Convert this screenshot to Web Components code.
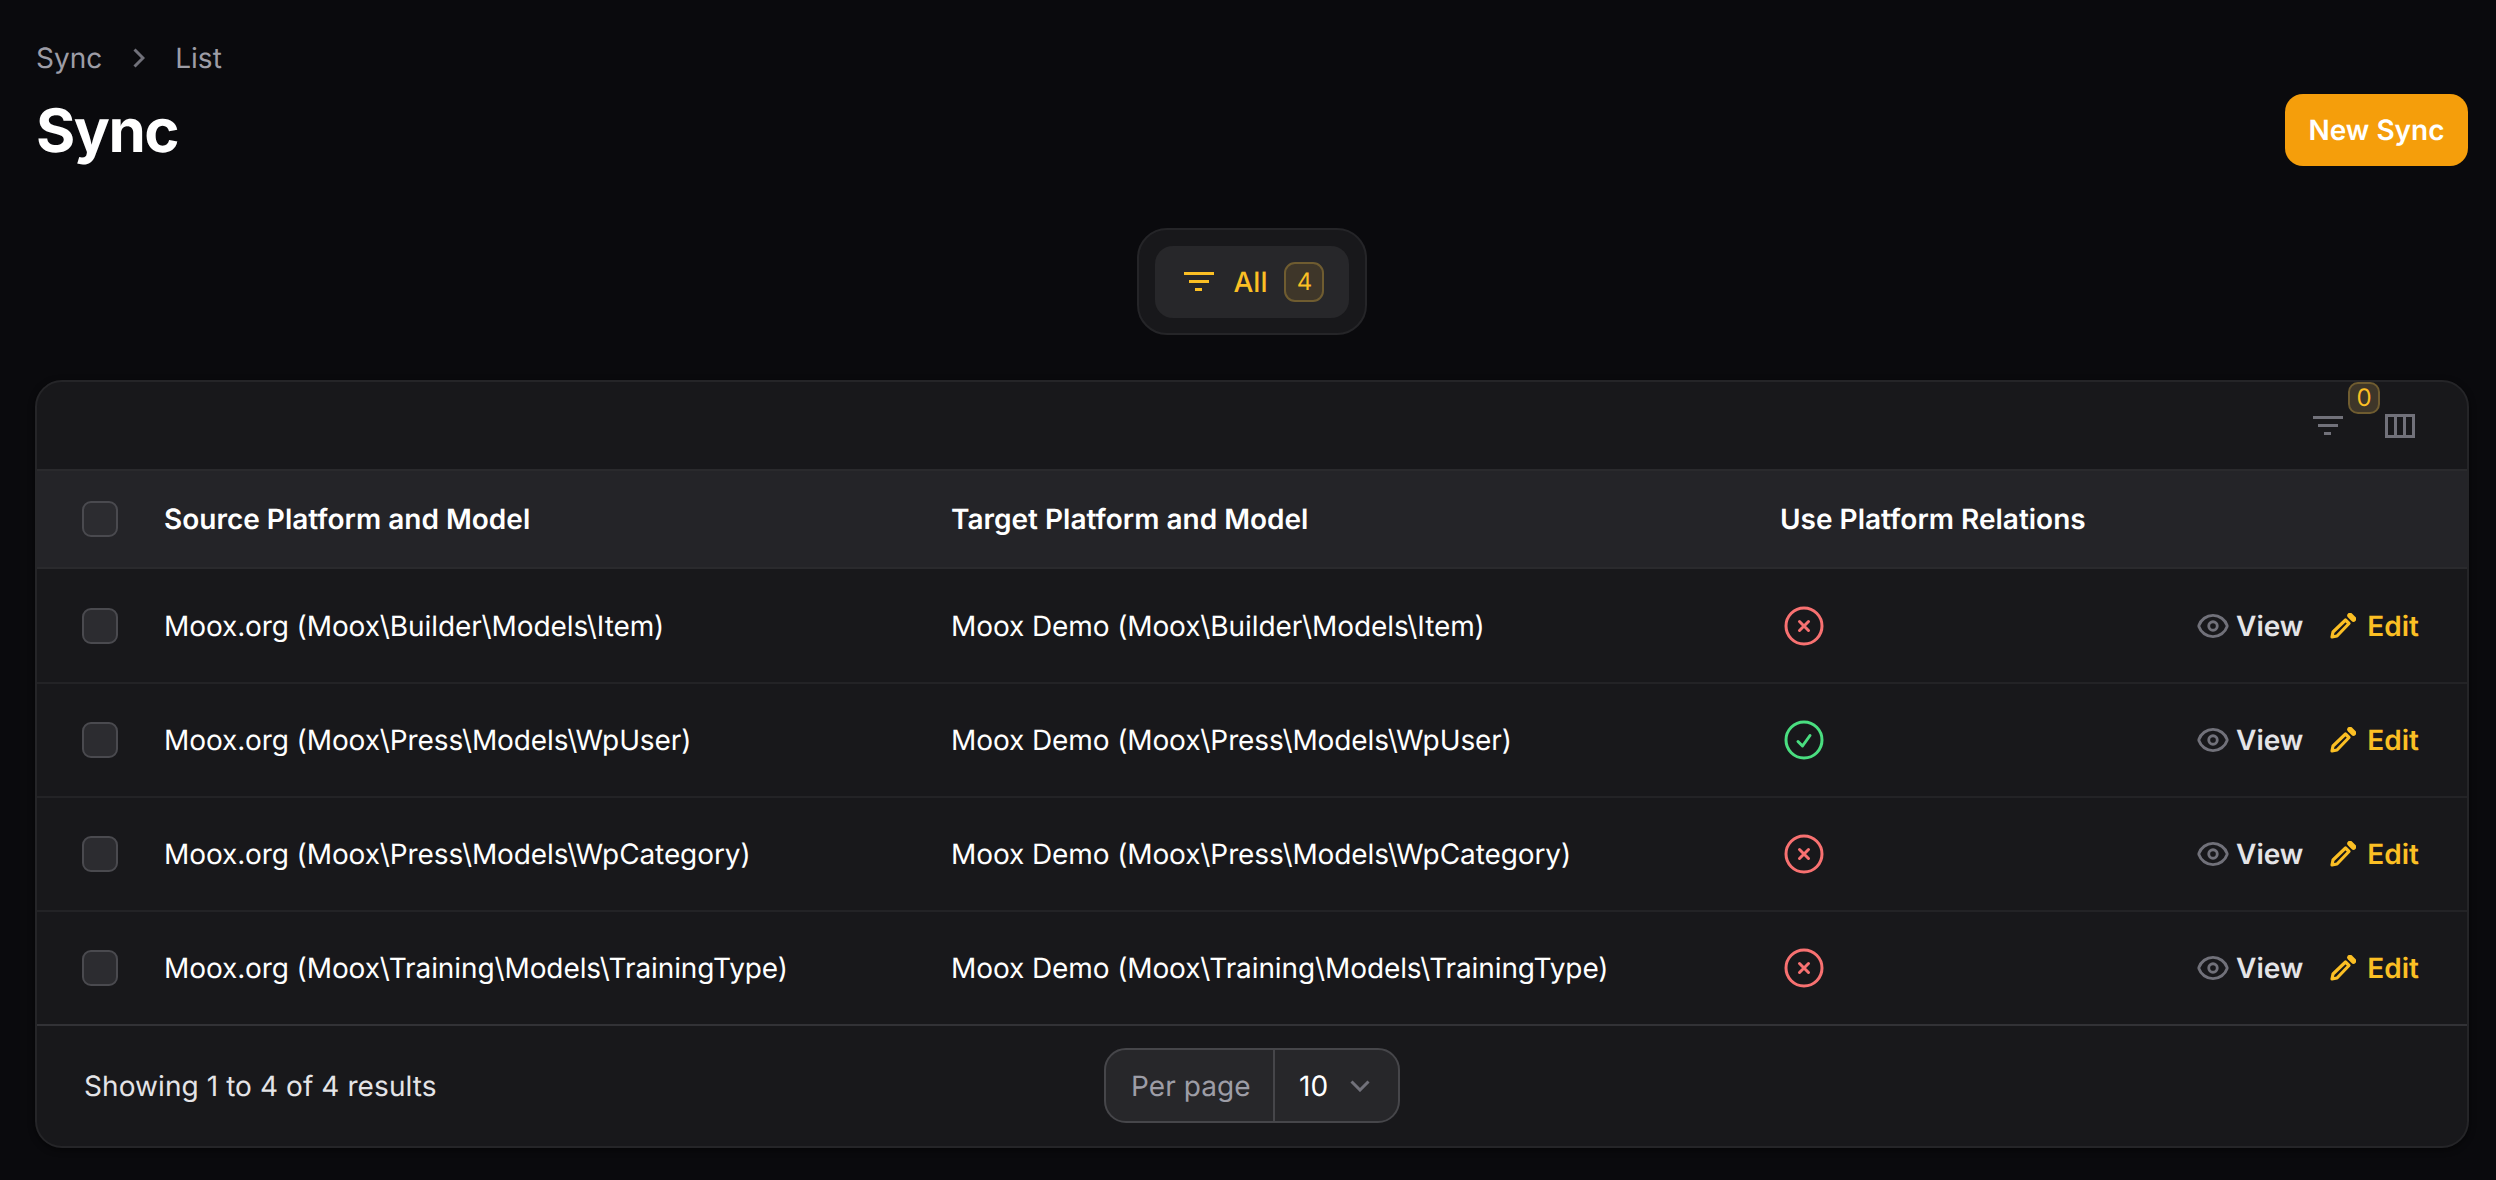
<!DOCTYPE html>
<html lang="en">
<head>
<meta charset="utf-8">
<title>Sync</title>
<style>
  html, body { margin: 0; height: 100%; background: #0a0a0d; overflow: hidden; }
  body { font-family: Inter, "Liberation Sans", sans-serif; color: #fff; text-rendering: geometricPrecision; }
</style>
</head>
<body>
<sync-page>
  <page-header title="Sync" action="New Sync" slot="header"></page-header>
  <tab-bar label="All" count="4" slot="tabs"></tab-bar>
  <sync-card slot="card">
    <sync-row slot="rows" source="Moox.org (Moox\Builder\Models\Item)" target="Moox Demo (Moox\Builder\Models\Item)" relations="no"></sync-row>
    <sync-row slot="rows" source="Moox.org (Moox\Press\Models\WpUser)" target="Moox Demo (Moox\Press\Models\WpUser)" relations="yes"></sync-row>
    <sync-row slot="rows" source="Moox.org (Moox\Press\Models\WpCategory)" target="Moox Demo (Moox\Press\Models\WpCategory)" relations="no"></sync-row>
    <sync-row slot="rows" source="Moox.org (Moox\Training\Models\TrainingType)" target="Moox Demo (Moox\Training\Models\TrainingType)" relations="no"></sync-row>
  </sync-card>
</sync-page>

<script>
const filterIcon = `<svg width="30" height="20" viewBox="0 0 30 20" fill="currentColor"><rect width="30" height="3"/><rect x="5" y="8" width="20" height="3"/><rect x="11" y="16" width="7" height="3"/></svg>`;

class SyncPage extends HTMLElement {
  constructor() {
    super();
    this.attachShadow({ mode: "open" });
    this.shadowRoot.innerHTML = `
      <style>
        :host { display: flex; flex-direction: column; padding: 38px 27px 0 36px; }
        .tabs { display: flex; justify-content: center; margin: 62px 2px 45px 0; }
        .card { display: block; margin-left: -1px; }
      </style>
      <slot name="header"></slot>
      <div class="tabs"><slot name="tabs"></slot></div>
      <div class="card"><slot name="card"></slot></div>
    `;
  }
}

class PageHeader extends HTMLElement {
  constructor() {
    super();
    this.attachShadow({ mode: "open" });
    this.shadowRoot.innerHTML = `
      <style>
        :host { display: flex; justify-content: space-between; align-items: flex-end; }
        .crumbs { display: flex; align-items: center; gap: 31px; height: 40px; font-size: 28px; color: #9d9da6; }
        .crumbs svg { display: block; color: #71717a; }
        .crumbs .last { margin-left: -1px; }
        h1 { margin: 18px 0 0; font-size: 60px; line-height: 70px; font-weight: 700; letter-spacing: -1.5px; color: #fff; }
        button {
          font: 600 28px/72px Inter, sans-serif; height: 72px; width: 183px; padding: 0; margin-right: 1px;
          border: 0; border-radius: 18px; background: #f59e0b; color: #fff; text-rendering: geometricPrecision;
        }
      </style>
      <div>
        <div class="crumbs">
          <span>Sync</span>
          <svg width="12" height="20" viewBox="0 0 12 20" fill="none" stroke="currentColor" stroke-width="3"><path d="M1.500 1.500 10 10l-8.500 8.500"/></svg>
          <span class="last">List</span>
        </div>
        <h1></h1>
      </div>
      <button type="button"></button>
    `;
  }
  connectedCallback() {
    this.shadowRoot.querySelector("h1").textContent = this.getAttribute("title");
    this.shadowRoot.querySelector("button").textContent = this.getAttribute("action");
  }
}

class CountBadge extends HTMLElement {
  constructor() {
    super();
    this.attachShadow({ mode: "open" });
    this.shadowRoot.innerHTML = `
      <style>
        :host {
          display: inline-flex; align-items: center; justify-content: center; box-sizing: border-box;
          border: 2px solid #6f5c30; background: #3e3629; color: #fbbf24;
          font-size: 24px; font-weight: 400; line-height: 1;
        }
      </style>
      <slot></slot>
    `;
  }
}

class TabBar extends HTMLElement {
  constructor() {
    super();
    this.attachShadow({ mode: "open" });
    this.shadowRoot.innerHTML = `
      <style>
        :host {
          display: block; box-sizing: border-box; width: 230px; height: 107px; padding: 16px;
          background: #18181b; border: 2px solid #252528; border-radius: 30px;
        }
        .tab {
          display: flex; align-items: center; box-sizing: border-box; height: 72px; padding-left: 29px;
          background: #27272a; border-radius: 18px; color: #fbbf24; font-size: 28px; font-weight: 500;
        }
        svg { display: block; margin-right: 20px; }
        count-badge { width: 40px; height: 40px; border-radius: 11px; margin-left: 17px; }
      </style>
      <div class="tab">
        ${filterIcon}
        <span class="label"></span>
        <count-badge></count-badge>
      </div>
    `;
  }
  connectedCallback() {
    this.shadowRoot.querySelector(".label").textContent = this.getAttribute("label");
    this.shadowRoot.querySelector("count-badge").textContent = this.getAttribute("count");
  }
}

class RowCheck extends HTMLElement {
  constructor() {
    super();
    this.attachShadow({ mode: "open" });
    this.shadowRoot.innerHTML = `
      <style>
        :host {
          display: block; box-sizing: border-box; width: 36px; height: 36px;
          background: #2c2c30; border: 2px solid #4a4a4f; border-radius: 9px;
        }
      </style>
    `;
  }
}

class SyncCard extends HTMLElement {
  constructor() {
    super();
    this.attachShadow({ mode: "open" });
    this.shadowRoot.innerHTML = `
      <style>
        :host {
          display: block; box-sizing: border-box; height: 768px; overflow: hidden;
          background: #18181b; border: 2px solid #252528; border-radius: 27px;
          box-shadow: 0 2px 6px rgba(0,0,0,.5);
        }
        .toolbar {
          position: relative; display: flex; justify-content: flex-end; align-items: center; gap: 42px;
          height: 87px; padding-right: 52px; color: #71717a;
          border-bottom: 2px solid #2a2a2d;
        }
        .toolbar svg { display: block; }
        .filter { position: relative; }
        .filter count-badge {
          position: absolute; left: 35px; top: -34px; width: 32px; height: 32px; border-radius: 10px;
        }
        .head {
          display: grid; grid-template-columns: 82px 787px 829px 1fr; align-items: center;
          box-sizing: border-box; height: 98px; background: #242428; font-size: 28px; font-weight: 600;
          padding-left: 45px; color: #fff; border-bottom: 2px solid #2a2a2d;
        }
        .foot {
          position: relative; display: flex; align-items: center; box-sizing: border-box; height: 122px; padding-left: 47px;
          border-top: 2px solid #323236; font-size: 28px; color: #e4e4e7; letter-spacing: 0.08px;
        }
        .per {
          position: absolute; left: 1067px; top: 22px; box-sizing: border-box; display: flex; width: 296px; height: 75px;
          background: #27272a; border: 2px solid #46464a; border-radius: 22px; align-items: stretch;
        }
        .per .lbl { display: flex; align-items: center; width: 169px; box-sizing: border-box; padding-left: 25px; color: #9d9da6; border-right: 2px solid #46464a; }
        .per .val { display: flex; align-items: center; padding-left: 24px; color: #fff; gap: 22px; }
        .per svg { display: block; color: #71717a; }
      </style>
      <div class="toolbar">
        <div class="filter">${filterIcon}<count-badge>0</count-badge></div>
        <svg width="30" height="24" viewBox="0 0 30 24" fill="none" stroke="currentColor" stroke-width="3"><rect x="1.500" y="1.500" width="27" height="21"/><path d="M10.500 1.500v21M19.500 1.500v21"/></svg>
      </div>
      <div class="head">
        <row-check></row-check>
        <span>Source Platform and Model</span>
        <span>Target Platform and Model</span>
        <span>Use Platform Relations</span>
      </div>
      <slot name="rows"></slot>
      <div class="foot">
        <span>Showing 1 to 4 of 4 results</span>
        <div class="per">
          <span class="lbl">Per page</span>
          <span class="val">10
            <svg width="20" height="12" viewBox="0 0 20 12" fill="none" stroke="currentColor" stroke-width="3"><path d="M1.500 1.500 10 10l8.500-8.500"/></svg>
          </span>
        </div>
      </div>
    `;
  }
}

class StatusIcon extends HTMLElement {
  constructor() {
    super();
    this.attachShadow({ mode: "open" });
    const ok = this.getAttribute("state") === "yes";
    this.shadowRoot.innerHTML = `
      <style>
        :host { display: block; width: 48px; height: 48px; color: ${ok ? "#4ade80" : "#f87171"}; }
        svg { display: block; }
      </style>
      <svg width="48" height="48" viewBox="0 0 24 24" fill="none" stroke="currentColor" stroke-width="1.500" stroke-linecap="round" stroke-linejoin="round">
        <path d="M21 12a9 9 0 1 1-18 0 9 9 0 0 1 18 0Z"/>
        <path d="${ok ? "M9 12.750 11.250 15 15 9.750" : "M9.750 9.750l4.500 4.500m0-4.500-4.500 4.500"}"/>
      </svg>
    `;
  }
}

class RowAction extends HTMLElement {
  constructor() {
    super();
    this.attachShadow({ mode: "open" });
    this.shadowRoot.innerHTML = `
      <style>
        :host { display: flex; align-items: center; font-size: 28px; font-weight: 600; letter-spacing: 0; }
        ::slotted(svg) { display: block; }
      </style>
      <slot name="icon"></slot>
      <slot></slot>
    `;
  }
}

class SyncRow extends HTMLElement {
  constructor() {
    super();
    this.attachShadow({ mode: "open" });
    this.shadowRoot.innerHTML = `
      <style>
        :host {
          display: grid; grid-template-columns: 82px 787px 829px 1fr; align-items: center;
          box-sizing: border-box; height: 114px; padding-left: 45px; font-size: 28px; color: #fff;
          border-top: 2px solid #232326;
        }
        :host(:first-of-type) { border-top: 0; height: 113px; }
        .src, .dst { letter-spacing: -0.1px; }
        .rel { display: flex; align-items: center; justify-content: space-between; }
        .actions { display: flex; justify-content: flex-end; gap: 27px; padding-right: 48px; }
        .view { color: #e4e4e7; gap: 6px; }
        .edit { color: #fbbf24; gap: 11px; }
      </style>
      <row-check></row-check>
      <span class="src"></span>
      <span class="dst"></span>
      <div class="rel">
        <status-icon state="${this.getAttribute("relations")}"></status-icon>
        <div class="actions">
          <row-action class="view">
            <svg slot="icon" width="34" height="34" viewBox="0 0 24 24" fill="none" stroke="#71717a" stroke-width="2"><path d="M2.036 12.322a1.012 1.012 0 0 1 0-.639C3.423 7.510 7.360 4.500 12 4.500c4.638 0 8.573 3.007 9.963 7.178.07.207.07.431 0 .639C20.577 16.490 16.640 19.500 12 19.500c-4.638 0-8.573-3.007-9.963-7.178Z"/><path d="M15 12a3 3 0 1 1-6 0 3 3 0 0 1 6 0Z"/></svg>
            View
          </row-action>
          <row-action class="edit">
            <svg slot="icon" width="26" height="26" viewBox="0 0 26 26"><path d="M15.500 7 19 10.500 7 23l-5 1 1-5Z" fill="none" stroke="currentColor" stroke-width="3.200" stroke-linejoin="round"/><path d="M20 2.500l3.500 3.500" fill="none" stroke="currentColor" stroke-width="5.500" stroke-linecap="round"/></svg>
            Edit
          </row-action>
        </div>
      </div>
    `;
  }
  connectedCallback() {
    this.shadowRoot.querySelector(".src").textContent = this.getAttribute("source");
    this.shadowRoot.querySelector(".dst").textContent = this.getAttribute("target");
  }
}

customElements.define("count-badge", CountBadge);
customElements.define("row-check", RowCheck);
customElements.define("status-icon", StatusIcon);
customElements.define("row-action", RowAction);
customElements.define("page-header", PageHeader);
customElements.define("tab-bar", TabBar);
customElements.define("sync-row", SyncRow);
customElements.define("sync-card", SyncCard);
customElements.define("sync-page", SyncPage);
</script>
</body>
</html>
